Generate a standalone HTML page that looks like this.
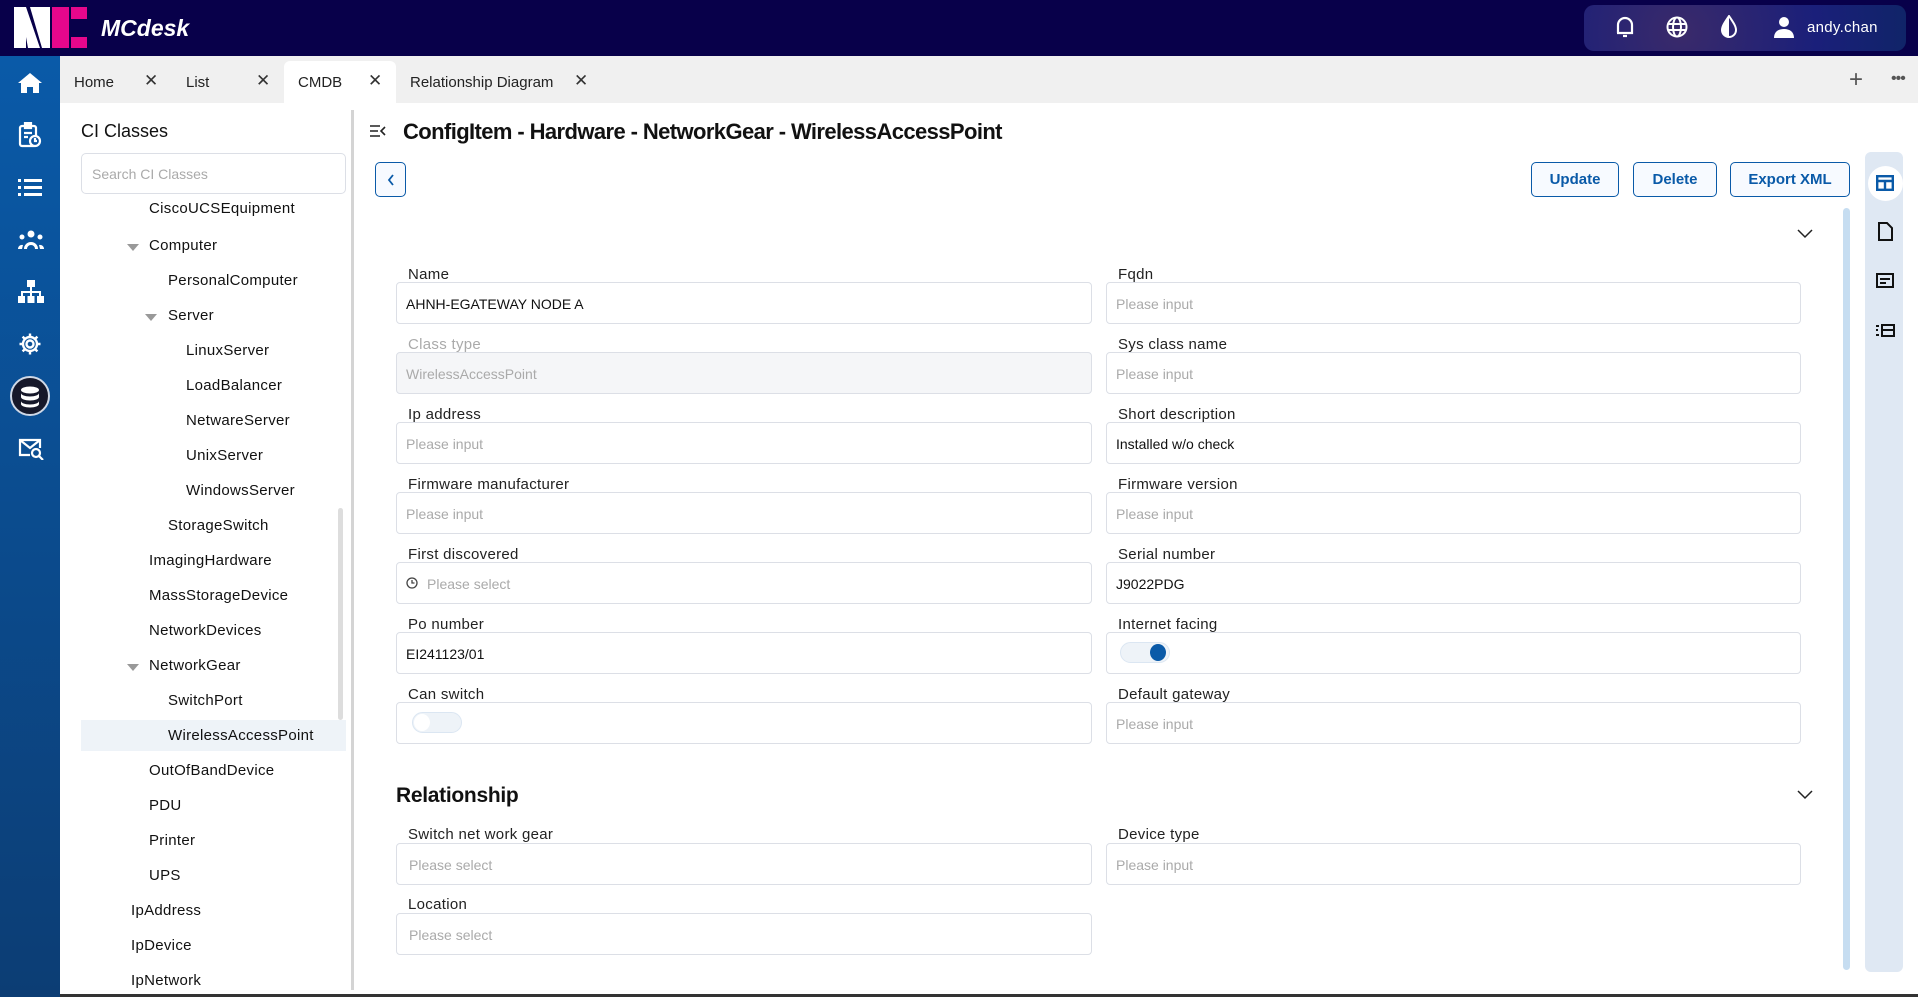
<!DOCTYPE html>
<html><head><meta charset="utf-8"><style>
*{box-sizing:border-box;margin:0;padding:0}
body{width:1918px;height:997px;overflow:hidden;position:relative;font-family:"Liberation Sans",sans-serif;background:#fff;color:#1f1f1f}
.a{position:absolute}
.hdr{left:0;top:0;width:1918px;height:56px;background:#08004a}
.nav{left:0;top:56px;width:60px;height:941px;background:linear-gradient(#0a5aa8,#0c3d74)}
.nav svg{position:absolute;left:18px}
.tabs{left:60px;top:56px;width:1858px;height:47px;background:#f0f0f0}
.tab{position:absolute;top:74px;font-size:15px;color:#222}
.x{position:absolute;top:71px;font-size:17px;color:#333}
.tree{font-size:15px;color:#111;position:absolute;letter-spacing:.3px}
.tri{position:absolute;width:0;height:0;border-left:6px solid transparent;border-right:6px solid transparent;border-top:7px solid #999}
.lbl{position:absolute;font-size:15px;color:#222;letter-spacing:.3px}
.in{position:absolute;height:42px;border:1px solid #dcdfe6;border-radius:4px;font-size:14px;color:#111;padding:13px 0 0 9px;background:#fff}
.ph{color:#aaa}
.btn{position:absolute;top:162px;height:35px;border:1.5px solid #0a5aa8;border-radius:5px;background:#f7faff;color:#0a5aa8;font-weight:bold;font-size:15px;text-align:center;line-height:34px}
</style></head><body>
<div class="a hdr"></div>
<!-- logo -->
<svg class="a" style="left:14px;top:7px" width="74" height="41" viewBox="0 0 74 41">
<polygon points="0,0 12,0 26,41 14,41 12,30 12,41 0,41" fill="#fff"/>
<polygon points="16,0 36,0 36,41 28,41" fill="#fff"/>
<rect x="38" y="0" width="17" height="41" fill="#e6078c"/><rect x="57" y="0" width="16" height="12" fill="#e6078c"/><rect x="57" y="30" width="16" height="11" fill="#e6078c"/>
</svg>
<div class="a" style="left:101px;top:15px;color:#fff;font-size:23px;font-weight:bold;font-style:italic">MCdesk</div>
<div class="a" style="left:1584px;top:5px;width:322px;height:46px;border-radius:10px;background:radial-gradient(circle at 30% 60%,#3a2a6a,#1a1f7a 60%,#102468)"></div>
<svg class="a" style="left:1614px;top:15px" width="22" height="24" viewBox="0 0 22 24" fill="none" stroke="#fff" stroke-width="2.2"><path d="M4 18V10a7 7 0 0 1 14 0v8H3h16"/><path d="M9 21h4"/></svg>
<svg class="a" style="left:1666px;top:16px" width="22" height="22" viewBox="0 0 22 22" fill="none" stroke="#fff" stroke-width="2"><circle cx="11" cy="11" r="9.5"/><ellipse cx="11" cy="11" rx="4" ry="9.5"/><path d="M2 8h18M2 14h18"/></svg>
<svg class="a" style="left:1720px;top:15px" width="18" height="24" viewBox="0 0 18 24"><path d="M9 1C5 7 2 11 2 15a7 7 0 0 0 14 0C16 11 13 7 9 1z" fill="none" stroke="#fff" stroke-width="2"/><path d="M9 1C5 7 2 11 2 15a7 7 0 0 0 7 7z" fill="#fff"/></svg>
<svg class="a" style="left:1773px;top:16px" width="22" height="22" viewBox="0 0 22 22" fill="#fff"><circle cx="11" cy="6" r="5"/><path d="M1 22c0-6 4-9 10-9s10 3 10 9z"/></svg>
<div class="a" style="left:1807px;top:19px;color:#fff;font-size:15px;letter-spacing:.3px">andy.chan</div>

<div class="a nav">
<svg style="top:16px" width="24" height="22" viewBox="0 0 24 22" fill="#fff"><path d="M12 1L0 11h3v10h6v-6h6v6h6V11h3z"/></svg>
<svg style="top:66px" width="24" height="26" viewBox="0 0 24 26" fill="none" stroke="#fff" stroke-width="2.2"><rect x="2" y="4" width="16" height="20" rx="2"/><rect x="7" y="1" width="6" height="5" fill="#fff"/><path d="M6 11h8M6 15h4"/><circle cx="17" cy="19" r="5" fill="#0b54a0"/><path d="M17 16v3h2"/></svg>
<svg style="top:122px" width="24" height="20" viewBox="0 0 24 20" fill="#fff"><rect x="0" y="1" width="3" height="3"/><rect x="6" y="1" width="18" height="3"/><rect x="0" y="8" width="3" height="3"/><rect x="6" y="8" width="18" height="3"/><rect x="0" y="15" width="3" height="3"/><rect x="6" y="15" width="18" height="3"/></svg>
<svg style="top:174px" width="26" height="20" viewBox="0 0 26 20" fill="#fff"><circle cx="13" cy="4" r="3.5"/><circle cx="4" cy="7" r="2.5"/><circle cx="22" cy="7" r="2.5"/><path d="M6 19a7 7 0 0 1 14 0h-3a4 4 0 0 0-8 0z"/><path d="M0 19a4 4 0 0 1 5-4l-1 4zM26 19a4 4 0 0 0-5-4l1 4z"/></svg>
<svg style="top:224px" width="26" height="24" viewBox="0 0 26 24" fill="#fff"><rect x="9" y="0" width="8" height="7"/><rect x="12" y="7" width="2" height="5"/><rect x="3" y="11" width="20" height="2"/><rect x="3" y="11" width="2" height="5"/><rect x="12" y="11" width="2" height="5"/><rect x="21" y="11" width="2" height="5"/><rect x="0" y="16" width="7" height="7"/><rect x="9.5" y="16" width="7" height="7"/><rect x="19" y="16" width="7" height="7"/></svg>
<svg style="top:276px" width="24" height="24" viewBox="0 0 24 24" fill="none" stroke="#fff" stroke-width="2.4"><circle cx="12" cy="12" r="3.5"/><path d="M12 1.5v4M12 18.5v4M1.5 12h4M18.5 12h4M4.6 4.6l2.8 2.8M16.6 16.6l2.8 2.8M4.6 19.4l2.8-2.8M16.6 7.4l2.8-2.8"/><circle cx="12" cy="12" r="7"/></svg>
<div style="position:absolute;left:10px;top:320px;width:40px;height:40px;border-radius:50%;background:#16182a;border:2px solid #cfd8e6"></div>
<svg style="top:330px;left:19px" width="22" height="22" viewBox="0 0 22 22" fill="#fff"><ellipse cx="11" cy="4" rx="9" ry="3.5"/><path d="M2 7c0 2 4 3.5 9 3.5s9-1.5 9-3.5v4c0 2-4 3.5-9 3.5S2 13 2 11z"/><path d="M2 15c0 2 4 3.5 9 3.5s9-1.5 9-3.5v3c0 2-4 3.5-9 3.5S2 20 2 18z"/></svg>
<svg style="top:382px" width="26" height="22" viewBox="0 0 26 22" fill="none" stroke="#fff" stroke-width="2.2"><path d="M12 17H2V2h20v8"/><path d="M2 2l10 8 10-8"/><circle cx="18" cy="15" r="4"/><path d="M21 18l4 4"/></svg>
</div>

<div class="a tabs"></div>
<div class="a" style="left:284px;top:61px;width:112px;height:42px;background:#fff;border-radius:6px 6px 0 0"></div>
<div class="tab" style="left:74px">Home</div><div class="x" style="left:144px">✕</div>
<div class="tab" style="left:186px">List</div><div class="x" style="left:256px">✕</div>
<div class="tab" style="left:298px">CMDB</div><div class="x" style="left:368px">✕</div>
<div class="tab" style="left:410px">Relationship Diagram</div><div class="x" style="left:574px">✕</div>
<div class="a" style="left:1849px;top:66px;font-size:24px;color:#555;font-weight:300">+</div>
<div class="a" style="left:1891px;top:70px;font-size:16px;color:#555;letter-spacing:-1px">•••</div>

<!-- left panel -->
<div class="a" style="left:81px;top:121px;font-size:18px;color:#111">CI Classes</div>
<div class="a" style="left:81px;top:153px;width:265px;height:41px;border:1px solid #dcdfe6;border-radius:5px;font-size:14px;color:#aaa;padding:12px 0 0 10px">Search CI Classes</div>
<div class="a" style="left:81px;top:198px;width:270px;height:18px;overflow:hidden"><div class="tree" style="left:68px;top:2px">CiscoUCSEquipment</div></div>
<div class="tri" style="left:127px;top:244px"></div>
<div class="tri" style="left:145px;top:314px"></div>
<div class="tri" style="left:127px;top:664px"></div>
<div class="a" style="left:81px;top:720px;width:265px;height:31px;background:#eef3f8"></div>
<div class="tree" style="left:149px;top:237px">Computer</div>
<div class="tree" style="left:168px;top:272px">PersonalComputer</div>
<div class="tree" style="left:168px;top:307px">Server</div>
<div class="tree" style="left:186px;top:342px">LinuxServer</div>
<div class="tree" style="left:186px;top:377px">LoadBalancer</div>
<div class="tree" style="left:186px;top:412px">NetwareServer</div>
<div class="tree" style="left:186px;top:447px">UnixServer</div>
<div class="tree" style="left:186px;top:482px">WindowsServer</div>
<div class="tree" style="left:168px;top:517px">StorageSwitch</div>
<div class="tree" style="left:149px;top:552px">ImagingHardware</div>
<div class="tree" style="left:149px;top:587px">MassStorageDevice</div>
<div class="tree" style="left:149px;top:622px">NetworkDevices</div>
<div class="tree" style="left:149px;top:657px">NetworkGear</div>
<div class="tree" style="left:168px;top:692px">SwitchPort</div>
<div class="tree" style="left:168px;top:727px">WirelessAccessPoint</div>
<div class="tree" style="left:149px;top:762px">OutOfBandDevice</div>
<div class="tree" style="left:149px;top:797px">PDU</div>
<div class="tree" style="left:149px;top:832px">Printer</div>
<div class="tree" style="left:149px;top:867px">UPS</div>
<div class="tree" style="left:131px;top:902px">IpAddress</div>
<div class="tree" style="left:131px;top:937px">IpDevice</div>
<div class="tree" style="left:131px;top:972px">IpNetwork</div>
<div class="a" style="left:338px;top:508px;width:5px;height:212px;background:#ddd;border-radius:3px"></div>
<div class="a" style="left:351px;top:110px;width:3px;height:880px;background:#d4d4d4"></div>
<div class="a" style="left:60px;top:994px;width:1858px;height:3px;background:#333"></div>

<!-- main -->
<svg class="a" style="left:370px;top:125px" width="16" height="12" viewBox="0 0 16 12" fill="none" stroke="#222" stroke-width="1.6"><path d="M0 1h10M0 6h8M0 11h10M15 2l-4 4 4 4"/></svg>
<div class="a" style="left:403px;top:119px;font-size:22px;font-weight:bold;color:#111;letter-spacing:-.6px">ConfigItem - Hardware - NetworkGear - WirelessAccessPoint</div>
<div class="a" style="left:375px;top:162px;width:31px;height:35px;border:1.5px solid #0a5aa8;border-radius:5px;background:#f7faff"></div>
<svg class="a" style="left:387px;top:174px" width="8" height="12" viewBox="0 0 8 12" fill="none" stroke="#0a5aa8" stroke-width="1.8"><path d="M6 1L2 6l4 5"/></svg>
<div class="btn" style="left:1531px;width:88px">Update</div>
<div class="btn" style="left:1633px;width:84px">Delete</div>
<div class="btn" style="left:1730px;width:120px">Export XML</div>
<div class="a" style="left:1865px;top:152px;width:38px;height:820px;background:#dfe8f3;border-radius:6px"></div>
<div class="a" style="left:1868px;top:166px;width:35px;height:35px;border-radius:50%;background:#fff"></div>
<svg class="a" style="left:1876px;top:175px" width="18" height="16" viewBox="0 0 18 16" fill="none" stroke="#0a5aa8" stroke-width="2.4"><rect x="1.2" y="1.2" width="15.6" height="13.6"/><path d="M1 6h16M9 6v9"/></svg>
<svg class="a" style="left:1878px;top:222px" width="15" height="19" viewBox="0 0 15 19" fill="none" stroke="#111" stroke-width="2"><path d="M1 1h8l5 5v12H1z"/></svg>
<svg class="a" style="left:1876px;top:273px" width="18" height="15" viewBox="0 0 18 15" fill="none" stroke="#111" stroke-width="2"><rect x="1" y="1" width="16" height="13"/><path d="M4 6h10M4 10h6"/></svg>
<svg class="a" style="left:1875px;top:324px" width="20" height="13" viewBox="0 0 20 13" fill="none" stroke="#111" stroke-width="2"><rect x="7" y="1" width="12" height="11"/><path d="M7 6h12M1 2h3M1 6h2M1 11h3"/></svg>
<div class="a" style="left:1843px;top:208px;width:7px;height:762px;background:#c6ddf1;border-radius:4px"></div>
<svg class="a" style="left:1797px;top:229px" width="16" height="10" viewBox="0 0 16 10" fill="none" stroke="#222" stroke-width="1.5"><path d="M1 1l7 7 7-7"/></svg>

<div class="lbl" style="left:408px;top:266px">Name</div><div class="in" style="left:396px;top:282px;width:696px">AHNH-EGATEWAY NODE A</div>
<div class="lbl" style="left:1118px;top:266px">Fqdn</div><div class="in ph" style="left:1106px;top:282px;width:695px">Please input</div>
<div class="lbl" style="left:408px;top:336px;color:#aaa">Class type</div><div class="in" style="left:396px;top:352px;width:696px;background:#f5f6f8;color:#aaa">WirelessAccessPoint</div>
<div class="lbl" style="left:1118px;top:336px">Sys class name</div><div class="in ph" style="left:1106px;top:352px;width:695px">Please input</div>
<div class="lbl" style="left:408px;top:406px">Ip address</div><div class="in ph" style="left:396px;top:422px;width:696px">Please input</div>
<div class="lbl" style="left:1118px;top:406px">Short description</div><div class="in" style="left:1106px;top:422px;width:695px">Installed w/o check</div>
<div class="lbl" style="left:408px;top:476px">Firmware manufacturer</div><div class="in ph" style="left:396px;top:492px;width:696px">Please input</div>
<div class="lbl" style="left:1118px;top:476px">Firmware version</div><div class="in ph" style="left:1106px;top:492px;width:695px">Please input</div>
<div class="lbl" style="left:408px;top:546px">First discovered</div><div class="in ph" style="left:396px;top:562px;width:696px;padding-left:30px">Please select</div>
<svg class="a" style="left:406px;top:577px" width="12" height="12" viewBox="0 0 12 12" fill="none" stroke="#444" stroke-width="1.3"><circle cx="6" cy="6" r="5"/><path d="M6 3v3h2.5"/></svg>
<div class="lbl" style="left:1118px;top:546px">Serial number</div><div class="in" style="left:1106px;top:562px;width:695px">J9022PDG</div>
<div class="lbl" style="left:408px;top:616px">Po number</div><div class="in" style="left:396px;top:632px;width:696px">EI241123/01</div>
<div class="lbl" style="left:1118px;top:616px">Internet facing</div><div class="in" style="left:1106px;top:632px;width:695px"></div>
<div class="a" style="left:1120px;top:642px;width:50px;height:21px;border-radius:11px;background:#eef3f8;border:1px solid #dbe6f2"></div>
<div class="a" style="left:1150px;top:644px;width:16px;height:17px;border-radius:50%;background:#0a5aa8"></div>
<div class="lbl" style="left:408px;top:686px">Can switch</div><div class="in" style="left:396px;top:702px;width:696px"></div>
<div class="a" style="left:412px;top:712px;width:50px;height:21px;border-radius:11px;background:#eef3f8;border:1px solid #dbe6f2"></div>
<div class="a" style="left:414px;top:714px;width:16px;height:17px;border-radius:50%;background:#fff"></div>
<div class="lbl" style="left:1118px;top:686px">Default gateway</div><div class="in ph" style="left:1106px;top:702px;width:695px">Please input</div>

<div class="a" style="left:396px;top:784px;font-size:21px;font-weight:bold;color:#111;letter-spacing:-.3px">Relationship</div>
<svg class="a" style="left:1797px;top:790px" width="16" height="10" viewBox="0 0 16 10" fill="none" stroke="#222" stroke-width="1.5"><path d="M1 1l7 7 7-7"/></svg>
<div class="lbl" style="left:408px;top:826px">Switch net work gear</div><div class="in ph" style="left:396px;top:843px;width:696px;padding-left:12px">Please select</div>
<div class="lbl" style="left:1118px;top:826px">Device type</div><div class="in ph" style="left:1106px;top:843px;width:695px">Please input</div>
<div class="lbl" style="left:408px;top:896px">Location</div><div class="in ph" style="left:396px;top:913px;width:696px;padding-left:12px">Please select</div>
</body></html>
